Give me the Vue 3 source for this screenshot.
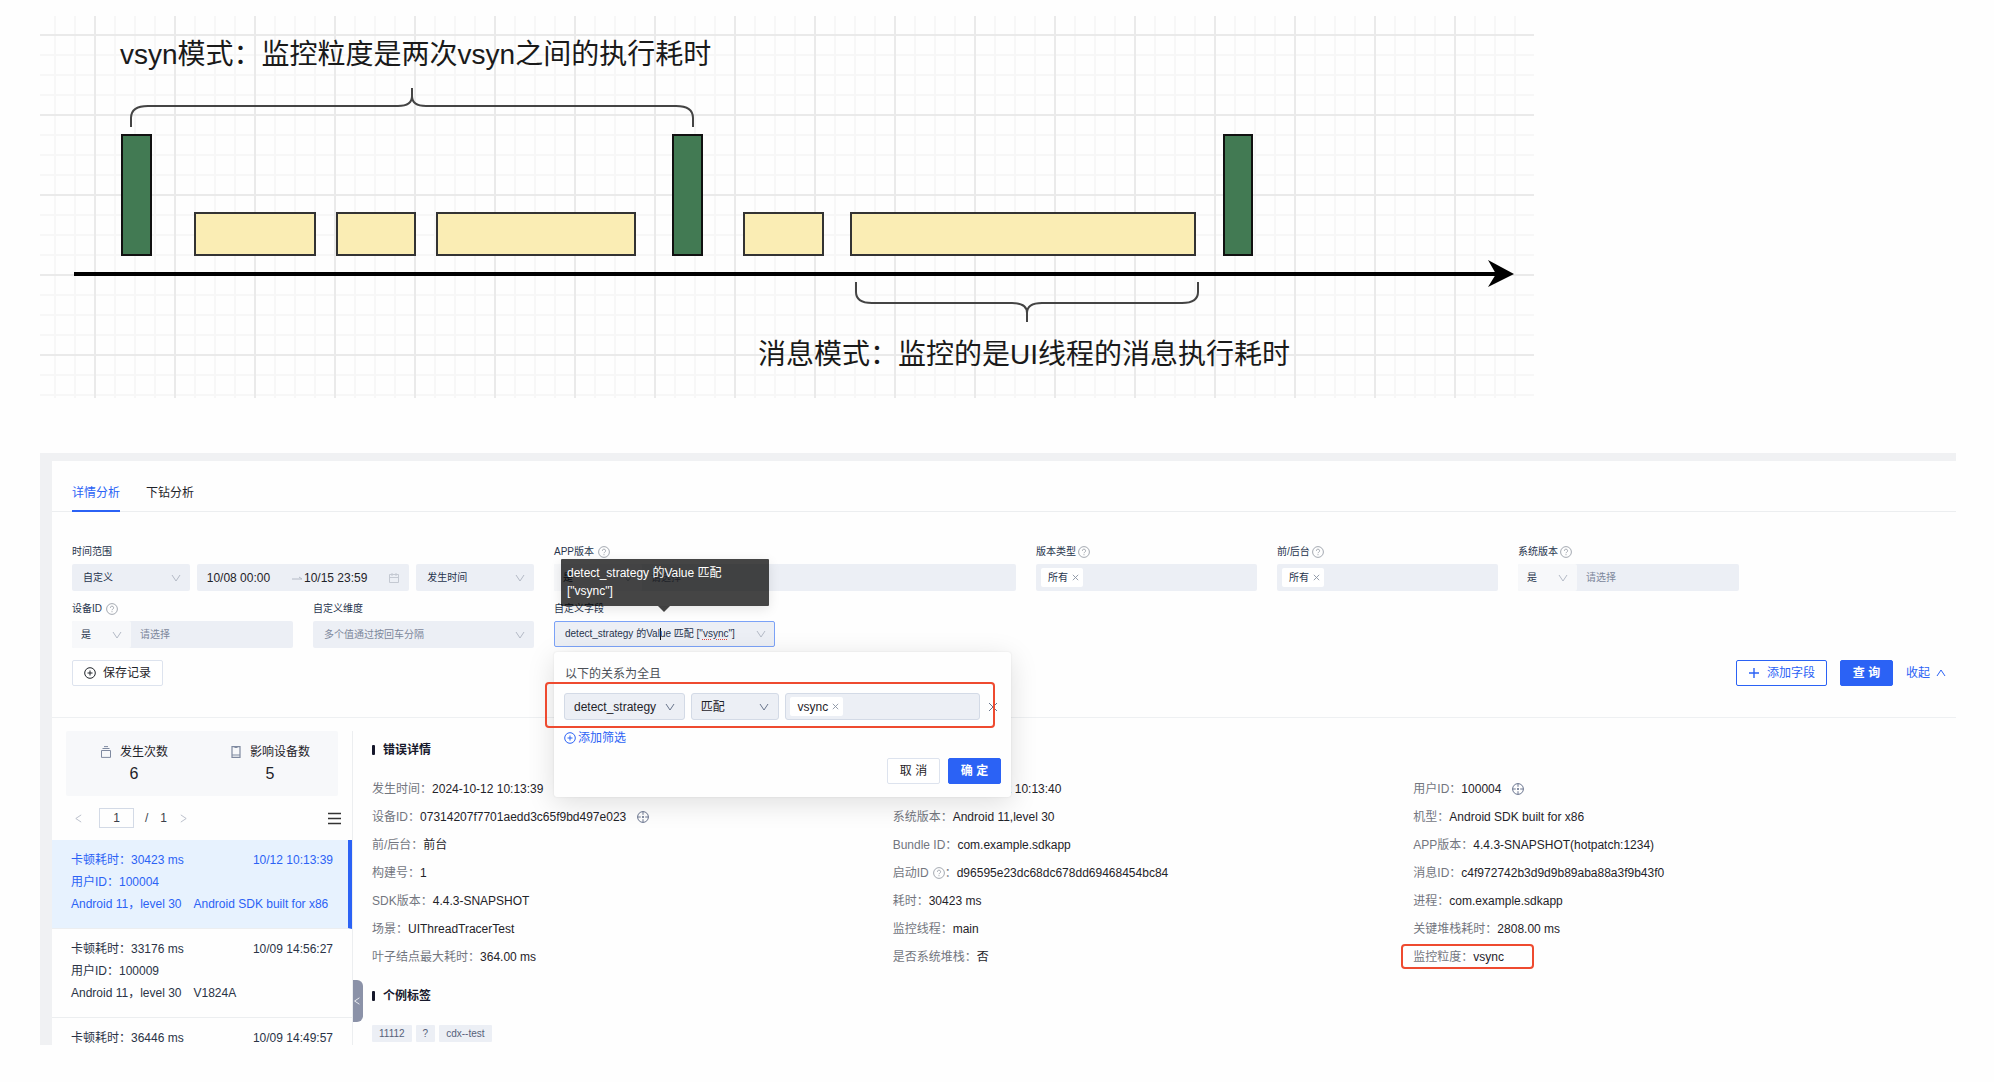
<script setup>
import { ref } from 'vue'

const greenBars = [[121, 31], [672, 31], [1223, 30]]
const messages = [[194, 122], [336, 80], [436, 200], [743, 81], [850, 346]]

const start = ref('10/08 00:00')
const end = ref('10/15 23:59')
const page = ref('1')

const records = [
  { cost: '30423 ms', time: '10/12 10:13:39', user: '100004', os: 'Android 11，level 30', model: 'Android SDK built for x86', active: true },
  { cost: '33176 ms', time: '10/09 14:56:27', user: '100009', os: 'Android 11，level 30', model: 'V1824A' },
  { cost: '36446 ms', time: '10/09 14:49:57' },
]

const details = [
  { label: '发生时间', value: '2024-10-12 10:13:39' },
  { label: 'App时间', value: '2024-10-12 10:13:40' },
  { label: '用户ID', value: '100004', target: true },
  { label: '设备ID', value: '07314207f7701aedd3c65f9bd497e023', target: true },
  { label: '系统版本', value: 'Android 11,level 30' },
  { label: '机型', value: 'Android SDK built for x86' },
  { label: '前/后台', value: '前台' },
  { label: 'Bundle ID', value: 'com.example.sdkapp' },
  { label: 'APP版本', value: '4.4.3-SNAPSHOT(hotpatch:1234)' },
  { label: '构建号', value: '1' },
  { label: '启动ID', value: 'd96595e23dc68dc678dd69468454bc84', help: true },
  { label: '消息ID', value: 'c4f972742b3d9d9b89aba88a3f9b43f0' },
  { label: 'SDK版本', value: '4.4.3-SNAPSHOT' },
  { label: '耗时', value: '30423 ms' },
  { label: '进程', value: 'com.example.sdkapp' },
  { label: '场景', value: 'UIThreadTracerTest' },
  { label: '监控线程', value: 'main' },
  { label: '关键堆栈耗时', value: '2808.00 ms' },
  { label: '叶子结点最大耗时', value: '364.00 ms' },
  { label: '是否系统堆栈', value: '否' },
  { label: '监控粒度', value: 'vsync', marked: true },
]
const tags = ['11112', '?', 'cdx--test']
</script>

<template>
  <main class="page">
    <svg class="symbols" aria-hidden="true">
      <symbol id="i-down" viewBox="0 0 10 10"><path d="M1 2l4 6 4-6" fill="none" stroke="currentColor" /></symbol>
      <symbol id="i-help" viewBox="0 0 12 12">
        <circle cx="6" cy="6" r="5.4" fill="none" stroke="currentColor" stroke-width=".9" />
        <path d="M4.4 4.8a1.6 1.6 0 1 1 2.3 1.4c-.5.3-.7.5-.7 1M6 8.2v1" fill="none" stroke="currentColor" stroke-width=".9" />
      </symbol>
      <symbol id="i-add" viewBox="0 0 12 12">
        <circle cx="6" cy="6" r="5.3" fill="none" stroke="currentColor" />
        <path d="M3.5 6h5M6 3.5v5" stroke="currentColor" />
      </symbol>
      <symbol id="i-target" viewBox="0 0 12 12">
        <circle cx="6" cy="6" r="5.4" fill="none" stroke="currentColor" stroke-width=".9" />
        <path d="M.6 6h3.2M8.2 6h3.2M6 .6v3.2M6 8.2v3.2" stroke="currentColor" stroke-width=".9" />
        <circle cx="6" cy="6" r="1" fill="currentColor" />
      </symbol>
      <symbol id="i-x" viewBox="0 0 10 10"><path d="M2 2l6 6M8 2l-6 6" stroke="currentColor" /></symbol>
    </svg>

    <svg class="diagram" viewBox="40 16 1494 382" role="img" aria-label="vsyn模式与消息模式">
      <defs>
        <pattern id="minor" x="14" y="14" width="20" height="20" patternUnits="userSpaceOnUse">
          <path d="M0 1h20M1 0v20" stroke="#f7f7f7" stroke-width="2" />
        </pattern>
        <pattern id="major" x="14" y="34" width="80" height="80" patternUnits="userSpaceOnUse">
          <path d="M0 1h80M1 0v80" stroke="#eaeaea" stroke-width="2" />
        </pattern>
      </defs>
      <rect x="40" y="16" width="1494" height="382" fill="#fefefe" />
      <rect x="40" y="16" width="1494" height="382" fill="url(#minor)" />
      <rect x="40" y="16" width="1494" height="382" fill="url(#major)" />
      <text x="120" y="64">vsyn模式：监控粒度是两次vsyn之间的执行耗时</text>
      <g fill="none" stroke="#444" stroke-width="2">
        <path d="M131 127V118Q131 106 148 106H398Q412 106 412 96V88V96Q412 106 426 106H676Q693 106 693 118V127" />
        <path d="M856 282V292Q856 303 872 303H1012Q1027 303 1027 313V322V313Q1027 303 1042 303H1182Q1198 303 1198 292V282" />
      </g>
      <g fill="#427a53" stroke="#111" stroke-width="2">
        <rect v-for="b in greenBars" :key="b[0]" :x="b[0] + 1" y="135" :width="b[1] - 2" height="120" />
      </g>
      <g fill="#faedb4" stroke="#333" stroke-width="2">
        <rect v-for="m in messages" :key="m[0]" :x="m[0] + 1" y="213" :width="m[1] - 2" height="42" />
      </g>
      <path d="M74 274H1500" stroke="#000" stroke-width="4" />
      <path d="M1514 274L1488 260L1496 274L1488 287Z" />
      <text x="758" y="364">消息模式：监控的是UI线程的消息执行耗时</text>
    </svg>

    <div class="frame">
      <section class="panel">
        <nav class="tabs">
          <a href="#detail" class="tab on">详情分析</a>
          <a href="#drill" class="tab">下钻分析</a>
        </nav>

        <form class="form" @submit.prevent>
          <div class="fields">
            <div class="field wide">
              <label class="label" for="range">时间范围</label>
              <div class="range">
                <span class="pick">
                  <select id="range"><option>自定义</option></select>
                  <svg class="chev"><use href="#i-down" /></svg>
                </span>
                <span class="dates">
                  <input v-model="start" aria-label="开始时间">
                  <svg class="arrow" viewBox="0 0 10 10"><path d="M0 6h10L7 4" fill="none" stroke="currentColor" /></svg>
                  <input v-model="end" aria-label="结束时间">
                  <svg class="cal" viewBox="0 0 10 10"><path d="M.5 1.5h9v8h-9zM.5 4.5h9M3 0v3M7 0v3" fill="none" stroke="currentColor" /></svg>
                </span>
                <span class="pick">
                  <select aria-label="时间类型"><option>发生时间</option></select>
                  <svg class="chev"><use href="#i-down" /></svg>
                </span>
              </div>
            </div>

            <div class="field wide">
              <label class="label" for="app">APP版本<svg class="help gap"><use href="#i-help" /></svg></label>
              <div class="pair">
                <span class="pick op long">
                  <select aria-label="APP版本条件"><option>是</option></select>
                  <svg class="chev"><use href="#i-down" /></svg>
                </span>
                <input id="app" class="box" placeholder="请选择">
              </div>
            </div>

            <div class="field">
              <span class="label">版本类型<svg class="help"><use href="#i-help" /></svg></span>
              <div class="multi"><span class="chip">所有<button type="button" aria-label="移除"><svg><use href="#i-x" /></svg></button></span></div>
            </div>

            <div class="field">
              <span class="label">前/后台<svg class="help"><use href="#i-help" /></svg></span>
              <div class="multi"><span class="chip">所有<button type="button" aria-label="移除"><svg><use href="#i-x" /></svg></button></span></div>
            </div>

            <div class="field">
              <label class="label" for="sys">系统版本<svg class="help"><use href="#i-help" /></svg></label>
              <div class="pair">
                <span class="pick op">
                  <select aria-label="系统版本条件"><option>是</option></select>
                  <svg class="chev"><use href="#i-down" /></svg>
                </span>
                <input id="sys" class="box" placeholder="请选择">
              </div>
            </div>

            <div class="field">
              <label class="label" for="dev">设备ID<svg class="help gap"><use href="#i-help" /></svg></label>
              <div class="pair">
                <span class="pick op">
                  <select aria-label="设备ID条件"><option>是</option></select>
                  <svg class="chev"><use href="#i-down" /></svg>
                </span>
                <input id="dev" class="box" placeholder="请选择">
              </div>
            </div>

            <div class="field">
              <label class="label" for="dim">自定义维度</label>
              <span class="pick">
                <input id="dim" class="box" placeholder="多个值通过按回车分隔">
                <svg class="chev"><use href="#i-down" /></svg>
              </span>
            </div>

            <div class="field custom">
              <span id="custom" class="label">自定义字段</span>
              <button type="button" class="combo" aria-labelledby="custom" aria-expanded="true">
                <span>detect_strategy 的Val<i class="caret"></i>ue 匹配 ["<span class="misspelt">vsync</span>"]</span>
                <svg class="chev"><use href="#i-down" /></svg>
              </button>

              <div class="tooltip" role="tooltip">detect_strategy 的Value 匹配 ["vsync"]</div>

              <div class="popup">
                <p class="rule-title">以下的关系为全且</p>
                <div class="rule">
                  <span class="pick key">
                    <select aria-label="字段"><option>detect_strategy</option></select>
                    <svg class="chev"><use href="#i-down" /></svg>
                  </span>
                  <span class="pick match">
                    <select aria-label="条件"><option>匹配</option></select>
                    <svg class="chev"><use href="#i-down" /></svg>
                  </span>
                  <div class="multi value"><span class="chip">vsync<button type="button" aria-label="移除"><svg><use href="#i-x" /></svg></button></span></div>
                  <button type="button" class="remove" aria-label="删除条件"><svg viewBox="0 0 10 10"><path d="M1 1l8 8M9 1l-8 8" stroke="currentColor" /></svg></button>
                </div>
                <button type="button" class="add-rule"><svg><use href="#i-add" /></svg>添加筛选</button>
                <div class="confirm">
                  <button type="button" class="btn">取 消</button>
                  <button type="button" class="btn primary">确 定</button>
                </div>
              </div>
            </div>
          </div>

          <div class="actions">
            <button type="button" class="btn save"><svg><use href="#i-add" /></svg>保存记录</button>
            <button type="button" class="btn outline"><svg viewBox="0 0 12 12"><path d="M1 6h10M6 1v10" stroke="currentColor" stroke-width="1.4" /></svg>添加字段</button>
            <button type="submit" class="btn primary">查 询</button>
            <a href="#fold" class="fold">收起<svg viewBox="0 0 10 10"><path d="M1 8l4-6 4 6" fill="none" stroke="currentColor" /></svg></a>
          </div>
        </form>

        <div class="lower">
          <aside class="side">
            <div class="stats">
              <div class="stat">
                <div class="stat-name"><svg viewBox="0 0 12 12"><path d="M1.5 4.5h9v6.9h-9zM2.5 2.5h7M4 .6h4" fill="none" stroke="currentColor" stroke-linejoin="round" /></svg>发生次数</div>
                <div class="stat-num">6</div>
              </div>
              <div class="stat">
                <div class="stat-name"><svg viewBox="0 0 12 12"><path d="M2 .6h8v10.8H2zM2 9h8M4.5 1.5h3" fill="none" stroke="currentColor" stroke-width="1.2" /></svg>影响设备数</div>
                <div class="stat-num">5</div>
              </div>
            </div>
            <div class="pager">
              <button type="button" aria-label="上一页"><svg viewBox="0 0 10 10"><path d="M8 1L2 5l6 4" fill="none" stroke="currentColor" /></svg></button>
              <input v-model="page" aria-label="页码">
              <span>/</span><span>1</span>
              <button type="button" aria-label="下一页"><svg viewBox="0 0 10 10"><path d="M2 1l6 4-6 4" fill="none" stroke="currentColor" /></svg></button>
              <button type="button" class="menu" aria-label="列表"><svg viewBox="0 0 13 13"><path d="M0 1.5h13M0 6.5h13M0 11.5h13" stroke="currentColor" stroke-width="1.3" /></svg></button>
            </div>
            <ul class="list">
              <li v-for="r in records" :key="r.time" :class="{ active: r.active }">
                <div class="split"><span>卡顿耗时：{{ r.cost }}</span><span>{{ r.time }}</span></div>
                <div v-if="r.user">用户ID：{{ r.user }}</div>
                <div v-if="r.os" class="device"><span>{{ r.os }}</span><span>{{ r.model }}</span></div>
              </li>
            </ul>
            <button type="button" class="handle" aria-label="折叠"><svg viewBox="0 0 10 10"><path d="M8 1L2 5l6 4" fill="none" stroke="currentColor" /></svg></button>
          </aside>

          <article class="detail">
            <h2>错误详情</h2>
            <dl>
              <div v-for="d in details" :key="d.label">
                <span class="entry" :class="{ marked: d.marked }">
                  <dt>{{ d.label }}<svg v-if="d.help" class="help gap"><use href="#i-help" /></svg>：</dt>
                  <dd>{{ d.value }}<svg v-if="d.target" class="target"><use href="#i-target" /></svg></dd>
                </span>
              </div>
            </dl>
            <h2>个例标签</h2>
            <div class="tags"><span v-for="t in tags" :key="t">{{ t }}</span></div>
          </article>
        </div>
      </section>
    </div>
  </main>
</template>

<style>
body { margin: 0; background: #fefefe; }
</style>

<style scoped>
* { box-sizing: border-box; }
.page {
  padding: 16px 38px 37px 40px;
  font: 12px/18px "Liberation Sans", "Noto Sans CJK SC", sans-serif;
  color: #1f2329;
}
button, input, select { font: inherit; color: inherit; margin: 0; padding: 0; border: 0; background: none; outline: 0; border-radius: 0; }
button, select { cursor: pointer; }
select { appearance: none; }
a { text-decoration: none; color: inherit; }
svg { display: block; flex: none; fill: none; }
.symbols { position: absolute; width: 0; height: 0; }

.diagram { width: 100%; max-width: 1494px; height: auto; fill: #000; }
.diagram text { font-size: 28px; fill: #1a1a1a; }

.frame { margin-top: 55px; padding: 8px 0 0 12px; background: #f0f1f3; }
.panel { background: #fefefe; }

.tabs { display: flex; gap: 26px; padding: 23px 20px 0; border-bottom: 1px solid #eceef0; }
.tab { padding-bottom: 8px; margin-bottom: -1px; border-bottom: 2px solid transparent; }
.tab.on { color: #2b62f5; border-color: #2b62f5; }

.form { padding: 32px 10px 31px 20px; border-bottom: 1px solid #eef0f2; }
.fields { display: grid; grid-template-columns: repeat(auto-fill, 221px); gap: 10px 20px; font-size: 10px; }
.field { min-width: 0; color: #27344d; }
.wide { grid-column: span 2; }
.label { display: flex; align-items: center; height: 16px; margin-bottom: 4px; }
.help { width: 12px; height: 12px; margin-left: 2px; color: #9a9fa8; }
.help.gap { margin-left: 4px; }
.pick { position: relative; display: block; background: #eceff5; border-radius: 2px; }
.pick select, .pick .box { width: 100%; height: 27px; padding: 0 26px 0 11px; display: block; }
.chev { position: absolute; right: 9px; top: 9px; width: 10px; height: 10px; color: #b4bac6; pointer-events: none; }
.range { display: grid; grid-template-columns: minmax(0, 118fr) minmax(0, 213fr) minmax(0, 118fr); gap: 7px; }
.dates { display: flex; align-items: center; padding: 0 10px; background: #eceff5; border-radius: 2px; font-size: 12px; color: #1f2329; }
.dates input { flex: 1; min-width: 0; height: 27px; }
.arrow { width: 10px; height: 10px; margin-right: 2px; color: #b4bac6; }
.cal { width: 10px; height: 10px; color: #c4c9d2; }
.pair { display: flex; background: #eceff5; border-radius: 2px; }
.op { flex: none; width: 59px; background: #f7f8fa; }
.pick.op select { padding: 0 20px 0 9px; }
.long { width: 88px; }
.box { flex: 1; min-width: 0; height: 27px; padding: 0 9px; }
.box::placeholder { color: #7d879b; opacity: 1; }
.multi { display: flex; align-items: center; height: 27px; padding: 0 5px; background: #eceff5; border-radius: 2px; }
.chip { display: flex; align-items: center; gap: 3px; height: 19px; padding: 0 3px 0 7px; background: #fff; border-radius: 2px; }
.chip svg { width: 9px; height: 9px; color: #8a93a3; }

.custom { position: relative; }
.combo { position: relative; display: flex; align-items: center; width: 100%; height: 26px; padding: 0 10px; border: 1px solid #7ba2f7; border-radius: 2px; background: #eceff5; white-space: nowrap; }
.combo .chev { top: 7px; right: 8px; }
.caret { display: inline-block; width: 1px; height: 12px; margin-right: -1px; background: #111; vertical-align: middle; }
.misspelt { text-decoration: underline dotted #e0453c 1px; text-underline-offset: 2px; }
.tooltip { position: absolute; z-index: 3; left: 7px; top: -42px; width: 208px; padding: 5px 40px 6px 6px; background: rgba(0, 0, 0, .73); border-radius: 1px; color: #fff; font-size: 12px; box-shadow: 0 3px 12px rgba(0, 0, 0, .1); }
.tooltip::after { content: ""; position: absolute; left: 97px; top: 100%; border: 6px solid transparent; border-bottom: 0; border-top-color: rgba(0, 0, 0, .73); }
.popup { position: absolute; z-index: 2; left: 0; top: 51px; width: 457px; padding: 13px 10px 13px; background: #fefefe; border-radius: 3px; box-shadow: 0 0 2px rgba(0, 0, 0, .1), 0 6px 28px rgba(0, 0, 0, .13); font-size: 12px; color: #1f2329; }
.rule-title { margin: 0 0 10px 1px; color: #4b4f57; }
.rule { position: relative; display: flex; align-items: center; width: 434px; gap: 6px; }
.rule::before { content: ""; position: absolute; inset: -11px 3px -8px -19px; border: 2px solid #ee4a2f; border-radius: 4px; pointer-events: none; }
.rule .pick, .value { border: 1px solid #d3dae6; border-radius: 3px; }
.rule select { height: 25px; padding: 0 20px 0 9px; }
.rule .chev { top: 8px; color: #69758c; }
.key { width: 121px; }
.match { width: 89px; }
.value { width: 195px; padding: 0 4px; }
.remove { margin-left: 2px; color: #69758c; }
.remove svg { width: 10px; height: 10px; }
.add-rule { display: flex; align-items: center; gap: 2px; margin-top: 9px; color: #2b62f5; }
.add-rule svg { width: 12px; height: 12px; }
.confirm { display: flex; justify-content: flex-end; gap: 8px; margin-top: 11px; }

.btn { display: flex; align-items: center; justify-content: center; gap: 7px; height: 26px; min-width: 53px; padding: 0 11px; border: 1px solid #dde3ee; border-radius: 2px; background: #fff; }
.btn svg { width: 12px; height: 12px; }
.btn.primary { background: #2b62f5; border-color: #2b62f5; color: #fff; font-weight: 700; }
.btn.outline { border-color: #2b62f5; color: #2b62f5; }
.actions { display: flex; align-items: center; gap: 13px; margin-top: 12px; }
.actions .outline { margin-left: auto; }
.fold { display: flex; align-items: center; gap: 6px; color: #2b62f5; }
.fold svg { width: 10px; height: 10px; }

.lower { display: flex; padding-top: 13px; }
.side { position: relative; flex: none; width: 301px; border-right: 1px solid #eceef0; }
.stats { display: flex; margin: 0 14px; padding: 12px 0 10px; background: #f7f8fa; border-radius: 2px; }
.stat { flex: 1; display: flex; flex-direction: column; align-items: center; gap: 1px; }
.stat-name { display: flex; align-items: center; gap: 8px; }
.stat-name svg { width: 12px; height: 12px; color: #7f8aa0; }
.stat-num { font-size: 16px; line-height: 24px; }
.pager { display: flex; align-items: center; height: 44px; padding: 0 11px 0 22px; gap: 12px; color: #3a3f4a; }
.pager svg { width: 9px; height: 9px; color: #b4bac6; }
.pager input { width: 35px; height: 20px; border: 1px solid #d3dae6; text-align: center; margin: 0 -1px 0 4px; }
.pager .menu { margin-left: auto; }
.pager .menu svg { width: 13px; height: 13px; color: #333; }
.list { list-style: none; margin: 0; padding: 0; max-height: 205px; overflow: hidden; line-height: 22px; color: #2a3346; }
.list li { padding: 9px 19px 13px; border-bottom: 1px solid #eceef0; white-space: nowrap; }
.list .active { background: #e7f2fe; color: #2b62f5; padding-right: 15px; border-right: 4px solid #2b62f5; }
.split { display: flex; justify-content: space-between; }
.device { display: flex; gap: 12px; }
.handle { position: absolute; left: 301px; bottom: 23px; display: flex; align-items: center; width: 10px; height: 42px; background: #8b92a8; color: #fff; border-radius: 0 6px 6px 0; }
.handle svg { width: 8px; height: 10px; }

.detail { flex: 1; min-width: 0; padding: 10px 22px 2px 19px; }
h2 { display: flex; align-items: center; gap: 8px; margin: 0; font-size: 12px; line-height: 18px; color: #16182b; }
h2::before { content: ""; width: 3px; height: 10px; border-radius: 1px; background: #16182b; }
dl { display: grid; grid-template-columns: repeat(3, 1fr); grid-auto-rows: 28px; align-items: center; margin: 16px 0; }
.entry { position: relative; display: inline-flex; align-items: center; white-space: nowrap; }
dt { display: flex; align-items: center; color: #73767e; }
dd { display: flex; align-items: center; margin: 0; }
.target { width: 12px; height: 12px; margin-left: 11px; color: #5d6a86; }
.marked::after { content: ""; position: absolute; inset: -4px -30px -3px -12px; border: 2px solid #ee4a2f; border-radius: 4px; }
.tags { display: flex; gap: 4px; margin-top: 20px; font-size: 10px; line-height: 17px; color: #56617a; }
.tags span { padding: 0 7px; background: #eceff5; border-radius: 1px; }
</style>
